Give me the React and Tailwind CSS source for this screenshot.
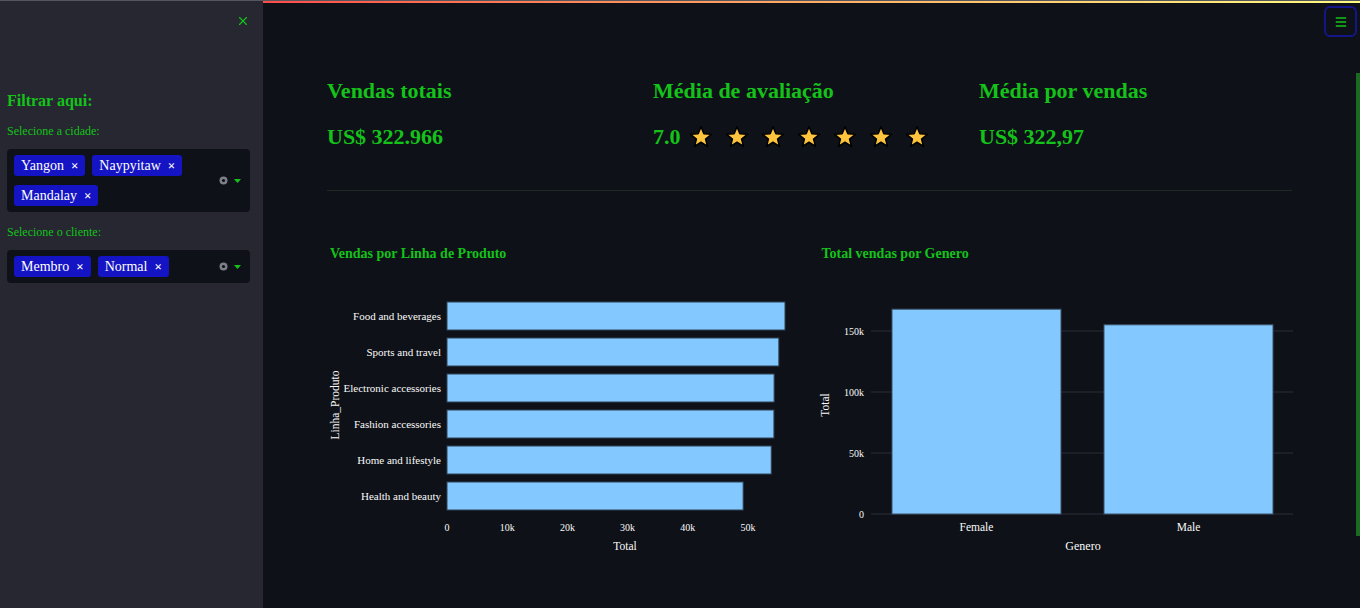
import { X, Menu } from 'lucide-react'

const serif = { fontFamily: '"Liberation Serif", "Times New Roman", serif' }

const produtos = [
  { nome: 'Food and beverages', total: 56144 },
  { nome: 'Sports and travel', total: 55123 },
  { nome: 'Electronic accessories', total: 54338 },
  { nome: 'Fashion accessories', total: 54306 },
  { nome: 'Home and lifestyle', total: 53862 },
  { nome: 'Health and beauty', total: 49193 },
]

const generos = [
  { nome: 'Female', total: 167883 },
  { nome: 'Male', total: 155084 },
]

function Tag({ label }) {
  return (
    <span className="inline-flex items-center gap-[7px] rounded-[3px] bg-[#1414c4] pl-[7px] pr-[7px] h-[21px] text-[14px] text-white">
      {label}
      <span className="text-[13px] leading-none font-bold">×</span>
    </span>
  )
}

function MultiSelect({ tags }) {
  return (
    <div className="flex items-center rounded-[4px] bg-[#0e1117] pl-[7px] pr-[9px] py-[6px]">
      <div className="flex flex-1 flex-wrap gap-x-[7px] gap-y-[9px]">
        {tags.map(t => <Tag key={t} label={t} />)}
      </div>
      <div className="flex items-center gap-[6px]">
        <svg width="9" height="9" viewBox="0 0 9 9">
          <circle cx="4.5" cy="4.5" r="4" fill="#7d7f88" />
          <circle cx="4.5" cy="4.5" r="1.6" fill="#0e1117" />
        </svg>
        <svg width="7" height="4" viewBox="0 0 7 4"><path d="M0 0h7L3.5 4z" fill="#14c21a" /></svg>
      </div>
    </div>
  )
}

function Star() {
  return (
    <svg width="24" height="24" viewBox="0 0 24 24">
      <path d="M12 1.8l2.9 7 7.5.5-5.8 4.8 1.9 7.3L12 17.3l-6.5 4.1 1.9-7.3L1.6 9.3l7.5-.5z" fill="#ffc43d" stroke="#000" strokeWidth="1.6" strokeLinejoin="round" />
    </svg>
  )
}

function Metric({ title, children }) {
  return (
    <div>
      <h3 className="text-[22px] font-semibold leading-[28px] text-[#14c21a]">{title}</h3>
      <div className="mt-[18px] flex items-center text-[22px] font-semibold leading-[28px] text-[#14c21a]">{children}</div>
    </div>
  )
}

function ProdutoChart() {
  const x0 = 120
  const k = 6.02 / 1000
  return (
    <svg width="474" height="290" className="mt-[8px] block">
      {produtos.map((p, i) => (
        <g key={p.nome}>
          <rect x={x0} y={32 + i * 36} width={p.total * k} height={28} fill="#83c9ff" stroke="#2f4457" strokeWidth="1" />
          <text x={x0 - 6} y={50 + i * 36} textAnchor="end" fontSize="11" fill="#fafafa" style={serif}>{p.nome}</text>
        </g>
      ))}
      {[0, 10, 20, 30, 40, 50].map(v => (
        <text key={v} x={x0 + v * 1000 * k} y={261} textAnchor="middle" fontSize="10" fill="#fafafa" style={serif}>{v === 0 ? '0' : v + 'k'}</text>
      ))}
      <text x={298} y={280} textAnchor="middle" fontSize="11.5" fill="#fafafa" style={serif}>Total</text>
      <text transform="translate(12,135) rotate(-90)" textAnchor="middle" fontSize="11.5" fill="#fafafa" style={serif}>Linha_Produto</text>
    </svg>
  )
}

function GeneroChart() {
  const base = 244
  const k = 61 / 50000
  return (
    <svg width="475" height="290" className="mt-[8px] block">
      {[0, 50, 100, 150].map(v => (
        <g key={v}>
          <line x1="53" x2="476" y1={base - v * 1000 * k} y2={base - v * 1000 * k} stroke="#2b2f3a" strokeWidth="1" />
          <text x={46} y={base - v * 1000 * k + 3.5} textAnchor="end" fontSize="10" fill="#fafafa" style={serif}>{v === 0 ? '0' : v + 'k'}</text>
        </g>
      ))}
      {generos.map((g, i) => {
        const x = 74 + i * 212
        const h = g.total * k
        return (
          <g key={g.nome}>
            <rect x={x} y={base - h} width={169} height={h} fill="#83c9ff" stroke="#3a5168" strokeWidth="1" />
            <text x={x + 84.5} y={261} textAnchor="middle" fontSize="11.5" fill="#fafafa" style={serif}>{g.nome}</text>
          </g>
        )
      })}
      <text x={265} y={280} textAnchor="middle" fontSize="12" fill="#fafafa" style={serif}>Genero</text>
      <text transform="translate(11,135) rotate(-90)" textAnchor="middle" fontSize="11.5" fill="#fafafa" style={serif}>Total</text>
    </svg>
  )
}

export default function App() {
  return (
    <div className="flex h-[608px] w-[1360px] overflow-hidden bg-[#0e1117]" style={serif}>
      {/* Sidebar */}
      <aside className="w-[263px] shrink-0 border-t border-[#55575e] bg-[#262730] pl-[7px] pr-[13px]">
        <div className="flex justify-end pt-[13px]">
          <X size={14} className="text-[#14c21a]" strokeWidth={2} />
        </div>
        <h2 className="mt-[62px] text-[16px] font-semibold leading-[22px] text-[#14c21a]">Filtrar aqui:</h2>
        <p className="mt-[12px] text-[12px] leading-[14px] text-[#14c21a]">Selecione a cidade:</p>
        <div className="mt-[11px]">
          <MultiSelect tags={['Yangon', 'Naypyitaw', 'Mandalay']} />
        </div>
        <p className="mt-[13px] text-[12px] leading-[14px] text-[#14c21a]">Selecione o cliente:</p>
        <div className="mt-[11px]">
          <MultiSelect tags={['Membro', 'Normal']} />
        </div>
      </aside>

      {/* Main */}
      <main className="relative flex-1">
        <div className="h-px bg-[#55575e]" />
        <div className="h-[2px] bg-gradient-to-r from-[#ff4b4b] to-[#fffd80]" />
        <button className="absolute right-[3px] top-[6px] flex h-[31px] w-[33px] items-center justify-center rounded-[6px] border-2 border-[#15158a]">
          <Menu size={14} strokeWidth={2.5} className="text-[#14c21a]" />
        </button>
        <div className="absolute right-0 top-[73px] h-[463px] w-[4px] bg-[#1b6a1f]" />

        <div className="pl-[64px] pr-[68px] pt-[74px]">
          <div className="grid grid-cols-3 gap-x-[13px]">
            <Metric title="Vendas totais">US$ 322.966</Metric>
            <Metric title="Média de avaliação">
              <span>7.0</span>
              <span className="ml-[8px] flex gap-[12px]">
                {Array.from({ length: 7 }).map((_, i) => <Star key={i} />)}
              </span>
            </Metric>
            <Metric title="Média por vendas">US$ 322,97</Metric>
          </div>
          <div className="mt-[39px] h-px bg-[#1e2a22]" />

          <div className="mt-[55px] grid grid-cols-2 gap-x-[16px]">
            <div>
              <h4 className="pl-[3px] text-[14px] font-bold leading-[16px] text-[#14c21a]">Vendas por Linha de Produto</h4>
              <ProdutoChart />
            </div>
            <div>
              <h4 className="pl-[4px] text-[14px] font-bold leading-[16px] text-[#14c21a]">Total vendas por Genero</h4>
              <GeneroChart />
            </div>
          </div>
        </div>
      </main>
    </div>
  )
}
